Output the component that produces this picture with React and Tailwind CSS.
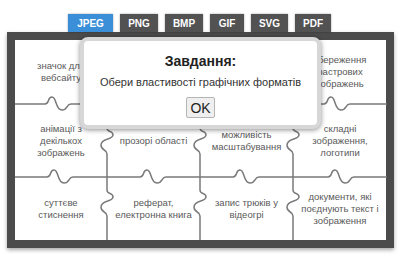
import React from 'react'

const tabs = [
  { label: 'JPEG', w: 'w-[45px]', active: true },
  { label: 'PNG', w: 'w-[38px]' },
  { label: 'BMP', w: 'w-[38px]' },
  { label: 'GIF', w: 'w-[34px]' },
  { label: 'SVG', w: 'w-[37px]' },
  { label: 'PDF', w: 'w-[36px]' },
]

const cells = [
  ['значок для\nвебсайту', '', '', 'збереження\nрастрових\nзображень'],
  ['анімації з\nдекількох\nзображень', 'прозорі області', 'можливість\nмасштабування', 'складні\nзображення,\nлоготипи'],
  ['суттєве\nстиснення', 'реферат,\nелектронна книга', 'запис трюків у\nвідеогрі', 'документи, які\nпоєднують текст і\nзображення'],
]

// inner board is 372 x 200
const colX = [0, 92, 185, 278, 372]
const rowY = [0, 64, 137, 200]

// wave along a horizontal line: hump up, then dip down
function hLine(y, starts) {
  let d = `M 0 ${y}`
  for (const a of starts) {
    d += ` L ${a} ${y}`
    d += ` C ${a + 5} ${y} ${a + 2} ${y - 7} ${a + 7} ${y - 7}`
    d += ` C ${a + 12} ${y - 7} ${a + 10} ${y + 6} ${a + 17} ${y + 6}`
    d += ` C ${a + 23} ${y + 6} ${a + 21} ${y} ${a + 26} ${y}`
  }
  return d + ` L 372 ${y}`
}

// wave along a vertical line: bulge right, then left
function vLine(x, starts) {
  let d = `M ${x} 0`
  for (const a of starts) {
    d += ` L ${x} ${a}`
    d += ` C ${x} ${a + 5} ${x + 6} ${a + 2} ${x + 6} ${a + 7}`
    d += ` C ${x + 6} ${a + 12} ${x - 6} ${a + 10} ${x - 6} ${a + 17}`
    d += ` C ${x - 6} ${a + 23} ${x} ${a + 21} ${x} ${a + 26}`
  }
  return d + ` L ${x} 200`
}

function PuzzleLines() {
  return (
    <svg className="absolute inset-0 pointer-events-none" width="372" height="200" viewBox="0 0 372 200" fill="none">
      <g stroke="#7a7a7a" strokeWidth="1.5">
        <path d={hLine(rowY[1], [30, 123, 216, 309])} />
        <path d={hLine(rowY[2], [32, 125, 218, 313])} />
        {colX.slice(1, 4).map(x => (
          <path key={x} d={vLine(x, [16, 88, 150])} />
        ))}
      </g>
    </svg>
  )
}

export default function App() {
  return (
    <div className="relative w-[400px] h-[255px] bg-white overflow-hidden font-['Liberation_Sans',Arial,sans-serif]">
      {/* Tabs */}
      <div className="flex gap-[7px] pl-[68px] pt-[14px]">
        {tabs.map(t => (
          <div key={t.label}
            className={`${t.w} h-[18px] flex items-center justify-center text-[10px] font-bold text-white shadow-[0_0_2px_rgba(0,0,0,0.35)] ${t.active ? 'bg-[#3b8ed8]' : 'bg-[#525252]'}`}>
            {t.label}
          </div>
        ))}
      </div>

      {/* Board */}
      <div className="ml-[7px] w-[387px] h-[216px] border-[8px] border-[#4b4b4b] bg-white shadow-[0_2px_4px_rgba(0,0,0,0.35)]">
        <div className="relative w-[372px] h-[200px] grid grid-cols-[92px_93px_93px_94px] grid-rows-[64px_73px_63px]">
          {cells.flat().map((txt, i) => (
            <div key={i} className="flex items-center justify-center px-[2px] text-center whitespace-pre-line text-[9.5px] leading-[12px] text-[#595959]">
              {txt}
            </div>
          ))}
          <PuzzleLines />
        </div>
      </div>

      {/* Task dialog */}
      <div className="absolute left-[80px] top-[37px] w-[241px] h-[92px] rounded-[8px] border-[4px] border-[#d7d7d7] bg-white shadow-[0_1px_5px_rgba(0,0,0,0.45)] flex flex-col items-center pt-[12px]">
        <div className="text-[14px] leading-[17px] font-bold text-[#222]">Завдання:</div>
        <div className="mt-[6px] text-[11px] leading-[13px] text-[#333]">Обери властивості графічних форматів</div>
        <button className="mt-[8px] w-[29px] h-[21px] flex items-center justify-center rounded-[2px] border border-[#b5b5b5] bg-[#efefef] text-[14px] leading-none text-[#222]">
          OK
        </button>
      </div>
    </div>
  )
}
